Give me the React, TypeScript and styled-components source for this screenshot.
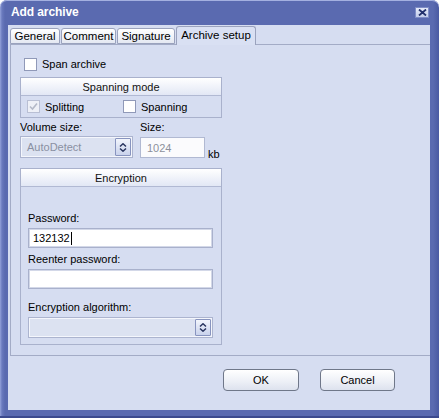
import React from "react";
import styled, { createGlobalStyle } from "styled-components";

const Global = createGlobalStyle`
  html, body { margin: 0; padding: 0; background: #ffffff; }
  body { font-family: "Liberation Sans", Arial, sans-serif; font-size: 11px; color: #000; }
  * { box-sizing: border-box; }
`;

const Window = styled.div`
  width: 439px;
  height: 418px;
  display: flex;
  flex-direction: column;
  padding: 0 9px 8px 8px;
  border-radius: 7px 7px 0 0;
  background: linear-gradient(90deg, #94a2da 0px, #6a7abe 2px, #5a6ab0 5px, #5a6ab0 calc(100% - 6px), #4a5aa2 100%);
  box-shadow: inset 0 1px 0 #a4b0e0, inset 0 -2px 0 #3c4a8e;
`;

const TitleBar = styled.div`
  height: 25px;
  flex: none;
  display: flex;
  align-items: center;
  justify-content: space-between;
  padding: 0 1px 2px 3px;
`;

const Title = styled.span`
  color: #ffffff;
  font-weight: bold;
  font-size: 12px;
  letter-spacing: -0.1px;
`;

const CloseButton = styled.div`
  width: 14px;
  height: 11px;
  margin-top: 2px;
  display: flex;
  align-items: center;
  justify-content: center;
  background: linear-gradient(#e4e9f8, #c4cdec);
  border: 1px solid #7e8cc6;
`;

const Client = styled.div`
  flex: 1;
  display: flex;
  flex-direction: column;
  background: #d6ddf1;
  padding: 2px 0 0 2px;
`;

const TabStrip = styled.div`
  display: flex;
  align-items: flex-end;
  gap: 1px;
  height: 17px;
  position: relative;
  z-index: 1;
`;

const Tab = styled.div<{ $active?: boolean; $w: number }>`
  width: ${(p) => p.$w}px;
  height: ${(p) => (p.$active ? 19 : 16)}px;
  margin-bottom: ${(p) => (p.$active ? -1 : 0)}px;
  display: flex;
  align-items: center;
  justify-content: center;
  padding-bottom: ${(p) => (p.$active ? 2 : 0)}px;
  border: 1px solid #9aa2bd;
  border-bottom: ${(p) => (p.$active ? "none" : "1px solid #9aa2bd")};
  border-radius: 3px 3px 0 0;
  background: ${(p) => (p.$active ? "#d9e0f3" : "linear-gradient(#ffffff, #e4e8f2)")};
  font-size: 11.5px;
  color: #000;
`;

const Panel = styled.div`
  height: 312px;
  flex: none;
  border: 1px solid #a3abc6;
  border-right: none;
  padding: 12px 0 0 9px;
  display: flex;
  flex-direction: column;
`;

const Column = styled.div`
  width: 202px;
  display: flex;
  flex-direction: column;
`;

const CheckRow = styled.label`
  display: flex;
  align-items: center;
  gap: 5px;
  height: 14px;
  font-size: 11px;
`;

const Box = styled.div<{ $disabled?: boolean }>`
  width: 13px;
  height: 13px;
  flex: none;
  display: flex;
  align-items: center;
  justify-content: center;
  background: ${(p) => (p.$disabled ? "#eef0f7" : "#ffffff")};
  border: 1px solid ${(p) => (p.$disabled ? "#b9bfd4" : "#9099b8")};
`;

const Group = styled.div<{ $mt: number }>`
  margin-top: ${(p) => p.$mt}px;
  border: 1px solid #a9b1cc;
  display: flex;
  flex-direction: column;
`;

const GroupHeader = styled.div`
  height: 18px;
  display: flex;
  align-items: center;
  justify-content: center;
  background: linear-gradient(#ffffff, #e2e7f5);
  border-bottom: 1px solid #b1b9d3;
  font-size: 11px;
  color: #111;
`;

const ModeRow = styled.div`
  height: 21px;
  display: grid;
  grid-template-columns: 96px auto;
  align-items: center;
  padding-left: 6px;
`;

const LabelRow = styled.div<{ $mt: number }>`
  margin-top: ${(p) => p.$mt}px;
  display: flex;
  height: 13px;
  align-items: center;
`;

const Label = styled.span<{ $w?: number; $mt?: number }>`
  display: block;
  width: ${(p) => (p.$w ? `${p.$w}px` : "auto")};
  margin-top: ${(p) => p.$mt ?? 0}px;
  height: 13px;
  line-height: 13px;
  font-size: 11px;
  color: #000;
`;

const FieldRow = styled.div`
  margin-top: 2px;
  display: flex;
  align-items: flex-end;
`;

const Select = styled.div<{ $w: number; $h: number }>`
  width: ${(p) => p.$w}px;
  height: ${(p) => p.$h}px;
  display: flex;
  align-items: center;
  justify-content: space-between;
  padding: 0 1px 0 6px;
  border: 1px solid #acb4cf;
  box-shadow: inset 0 0 0 1px #f4f6fc;
  background: #dce2f1;
  color: #8a90a2;
  font-size: 11px;
`;

const Spin = styled.div<{ $h: number }>`
  width: 16px;
  height: ${(p) => p.$h}px;
  display: flex;
  align-items: center;
  justify-content: center;
  border: 1px solid #8894bf;
  border-radius: 1px;
  background: linear-gradient(#f2f5fc, #c9d2ec);
`;

const SizeInput = styled.div`
  width: 65px;
  height: 21px;
  margin-left: 7px;
  display: flex;
  align-items: center;
  padding-left: 6px;
  border: 1px solid #b1b9d2;
  background: #fbfbfd;
  color: #8c909c;
  font-size: 11px;
`;

const Unit = styled.span`
  margin-left: 3px;
  margin-bottom: -2px;
  font-size: 11px;
`;

const GroupBody = styled.div`
  padding: 25px 8px 6px 7px;
  display: flex;
  flex-direction: column;
`;

const TextInput = styled.div<{ $mt?: number }>`
  margin-top: ${(p) => p.$mt ?? 3}px;
  height: 20px;
  display: flex;
  align-items: center;
  padding-left: 4px;
  background: #ffffff;
  border: 1px solid #a9b1cc;
  box-shadow: inset 0 0 0 1px #d3d8e8;
  font-size: 11px;
  color: #000;
`;

const Caret = styled.span`
  display: inline-block;
  width: 1px;
  height: 13px;
  margin-left: 1px;
  background: #000;
`;

const Footer = styled.div`
  flex: 1;
  display: flex;
  justify-content: flex-end;
  align-items: flex-start;
  gap: 21px;
  padding: 13px 35px 0 0;
`;

const Button = styled.div<{ $w: number }>`
  width: ${(p) => p.$w}px;
  height: 22px;
  display: flex;
  align-items: center;
  justify-content: center;
  border: 1px solid #6f7789;
  border-radius: 4px;
  background: linear-gradient(#ffffff, #eceff6 60%, #dde2ee);
  font-size: 11px;
  color: #000;
`;

const Check = ({ color }: { color: string }) => (
  <svg width="9" height="9" viewBox="0 0 9 9">
    <path d="M1 4.5 L3.5 7 L8 1.5" fill="none" stroke={color} strokeWidth="1.6" />
  </svg>
);

const SpinIcon = () => (
  <svg width="8" height="9" viewBox="0 0 8 9">
    <path d="M1 3.5 L4 0.8 L7 3.5 M1 5.5 L4 8.2 L7 5.5" fill="none" stroke="#28345e" strokeWidth="1.5" />
  </svg>
);

const CloseIcon = () => (
  <svg width="9" height="7" viewBox="0 0 9 7">
    <path d="M1 0.5 L8 6.5 M8 0.5 L1 6.5" stroke="#22306c" strokeWidth="1.8" />
    <rect x="3" y="2" width="3" height="3" fill="#22306c" />
  </svg>
);

export default function App() {
  return (
    <>
      <Global />
      <Window>
        <TitleBar>
          <Title>Add archive</Title>
          <CloseButton>
            <CloseIcon />
          </CloseButton>
        </TitleBar>
        <Client>
          <TabStrip>
            <Tab $w={50}>General</Tab>
            <Tab $w={55}>Comment</Tab>
            <Tab $w={58}>Signature</Tab>
            <Tab $w={80} $active>Archive setup</Tab>
          </TabStrip>
          <Panel>
            <Column>
              <CheckRow style={{ marginLeft: 4 }}>
                <Box />
                Span archive
              </CheckRow>
              <Group $mt={6}>
                <GroupHeader>Spanning mode</GroupHeader>
                <ModeRow>
                  <CheckRow>
                    <Box $disabled>
                      <Check color="#b4b9c8" />
                    </Box>
                    Splitting
                  </CheckRow>
                  <CheckRow>
                    <Box />
                    Spanning
                  </CheckRow>
                </ModeRow>
              </Group>
              <LabelRow $mt={3}>
                <Label $w={120}>Volume size:</Label>
                <Label>Size:</Label>
              </LabelRow>
              <FieldRow>
                <Select $w={113} $h={22}>
                  AutoDetect
                  <Spin $h={18}>
                    <SpinIcon />
                  </Spin>
                </Select>
                <SizeInput>1024</SizeInput>
                <Unit>kb</Unit>
              </FieldRow>
              <Group $mt={10}>
                <GroupHeader>Encryption</GroupHeader>
                <GroupBody>
                  <Label>Password:</Label>
                  <TextInput>
                    132132
                    <Caret />
                  </TextInput>
                  <Label $mt={5}>Reenter password:</Label>
                  <TextInput />
                  <Label $mt={12}>Encryption algorithm:</Label>
                  <Select $w={185} $h={21} style={{ marginTop: 3 }}>
                    <span />
                    <Spin $h={17}>
                      <SpinIcon />
                    </Spin>
                  </Select>
                </GroupBody>
              </Group>
            </Column>
          </Panel>
          <Footer>
            <Button $w={76}>OK</Button>
            <Button $w={75}>Cancel</Button>
          </Footer>
        </Client>
      </Window>
    </>
  );
}
